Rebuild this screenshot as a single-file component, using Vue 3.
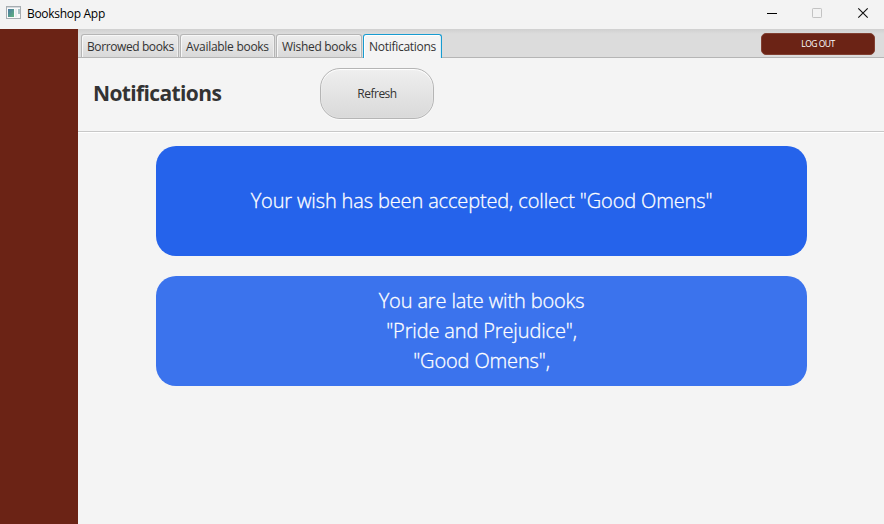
<script setup>
import { ref } from 'vue'

const tabs = [
  { label: 'Borrowed books', kind: 'borrowed' },
  { label: 'Available books', kind: 'available' },
  { label: 'Wished books', kind: 'wished' },
  { label: 'Notifications', kind: 'notifications' },
]
const active = ref('notifications')
const notices = [
  { kind: 'wish', lines: ['Your wish has been accepted, collect "Good Omens"'] },
  { kind: 'late', lines: ['You are late with books', '"Pride and Prejudice",', '"Good Omens",'] },
]
</script>

<template>
  <div class="window">
    <header class="titlebar">
      <svg class="app-icon" width="16" height="14" viewBox="0 0 16 14">
        <defs>
          <linearGradient id="pane" x1="0" y1="0" x2="1" y2="1">
            <stop offset="0" stop-color="#4b78a4" />
            <stop offset="1" stop-color="#5fb47c" />
          </linearGradient>
        </defs>
        <rect x="0.5" y="0.5" width="14" height="12" fill="#fafafa" stroke="#a7adb1" />
        <path d="M1 1.5H14" stroke="#d5dade" />
        <rect x="2" y="3" width="6" height="8" fill="url(#pane)" />
        <rect x="9" y="3" width="2" height="8" fill="#e9edef" />
        <path d="M13 3V8" stroke="#8fb0b5" stroke-width="1.5" />
      </svg>
      <span class="app-title">Bookshop App</span>
      <svg class="controls" width="106" height="12" viewBox="0 0 106 12" fill="none">
        <path d="M0 6.5H10" stroke="#000" />
        <rect x="45.5" y="1.5" width="9" height="9" rx="0.7" stroke="#c3c3c3" />
        <path d="M91.3 1.3L100.7 10.7M100.7 1.3L91.3 10.7" stroke="#111" stroke-width="1.15" />
      </svg>
    </header>
    <div class="body">
      <aside class="sidebar"></aside>
      <main class="main">
        <nav class="tabbar">
          <button
            v-for="t in tabs"
            :key="t.kind"
            class="tab"
            :class="[t.kind, { active: active === t.kind }]"
            @click="active = t.kind"
          >
            <span>{{ t.label }}</span>
          </button>
          <button class="logout"><span>LOG OUT</span></button>
        </nav>
        <section class="toolbar">
          <h1>Notifications</h1>
          <button class="refresh"><span>Refresh</span></button>
        </section>
        <section class="list">
          <article v-for="n in notices" :key="n.kind" class="notice" :class="n.kind">
            <p v-for="line in n.lines" :key="line">{{ line }}</p>
          </article>
        </section>
      </main>
    </div>
  </div>
</template>

<style>
body {
  margin: 0;
  overflow: hidden;
}
</style>

<style scoped>
.window {
  width: 884px;
  height: 524px;
  display: flex;
  flex-direction: column;
  overflow: hidden;
  background: #f4f4f4;
  font-family: "Open Sans", "Noto Sans", sans-serif;
  color: #333;
}
button {
  font-family: inherit;
  color: inherit;
  margin: 0;
  padding: 0;
  box-sizing: border-box;
  white-space: nowrap;
}
.titlebar {
  flex: none;
  height: 29px;
  box-sizing: border-box;
  display: flex;
  align-items: center;
  padding: 0 11px 2px 6px;
  background: #f3f3f3;
}
.app-icon {
  margin-bottom: 1px;
}
.app-title {
  margin-left: 5px;
  font-size: 12px;
  line-height: 16px;
  letter-spacing: -0.3px;
  color: #000;
}
.controls {
  margin-left: auto;
  margin-bottom: 2px;
}
.body {
  flex: 1;
  display: flex;
}
.sidebar {
  width: 78px;
  background: #6b2315;
}
.main {
  flex: 1;
  display: flex;
  flex-direction: column;
}
.tabbar {
  height: 29px;
  box-sizing: border-box;
  display: flex;
  align-items: flex-start;
  gap: 1px;
  padding: 5px 9px 0 3px;
  border-bottom: 1px solid #b5b5b5;
  background: linear-gradient(#d0d0d0, #dcdcdc 5px, #dcdcdc);
}
.tab {
  height: 23px;
  border: 1px solid #b5b5b5;
  border-bottom: 0;
  border-radius: 3px 3px 0 0;
  background: linear-gradient(#ececec, #d9d9d9);
  box-shadow: inset 1px 1px #f7f7f7, inset -1px 0 #eeeeee;
  font-size: 12px;
  line-height: 22px;
  text-align: left;
  padding-left: 5px;
  padding-top: 1px;
}
.borrowed {
  width: 98px;
  letter-spacing: -0.4px;
}
.available {
  width: 95px;
  letter-spacing: -0.28px;
}
.wished {
  width: 86px;
  letter-spacing: -0.3px;
}
.notifications {
  width: 79px;
  letter-spacing: -0.28px;
}
.tab.active {
  height: 24px;
  background: #f4f4f4;
  border-color: #179bd0;
  box-shadow: inset 1px 1px #fff, inset -1px 0 #d9edf5;
}
.logout {
  width: 114px;
  height: 22px;
  margin: -1px 0 0 auto;
  border: 1px solid #813f31;
  border-radius: 5px;
  background: #6b2315;
  color: #fff;
  font-size: 8.5px;
  line-height: 20px;
  letter-spacing: -0.5px;
}
.toolbar {
  height: 74px;
  box-sizing: border-box;
  display: flex;
  align-items: center;
  border-bottom: 1px solid #c8c8c8;
  box-shadow: 0 1px #fff;
  padding: 0 0 2px 15px;
}
h1 {
  width: 227px;
  margin: 0 0 2px;
  font-size: 21px;
  line-height: 30px;
  font-weight: 700;
  letter-spacing: -0.63px;
}
.refresh {
  width: 114px;
  height: 51px;
  border: 1px solid #b5b5b5;
  border-radius: 20px;
  background: linear-gradient(#efefef, #d9d9d9);
  box-shadow: inset 0 1px 1px #fff, inset 0 0 1px #fff, 0 1px #fafafa;
  font-size: 12px;
  letter-spacing: -0.5px;
}
.list {
  padding: 14px 77px 0 78px;
  display: flex;
  flex-direction: column;
  gap: 20px;
}
.notice {
  height: 110px;
  border-radius: 20px;
  display: flex;
  flex-direction: column;
  align-items: center;
  justify-content: center;
  background: #2563eb;
  color: #fff;
}
.notice.late {
  background: #3b73ed;
}
.notice p {
  margin: 0;
  font-size: 20px;
  font-weight: 300;
  -webkit-text-stroke: 0.3px #fff;
  line-height: 30px;
  letter-spacing: -0.14px;
  white-space: nowrap;
}
</style>
